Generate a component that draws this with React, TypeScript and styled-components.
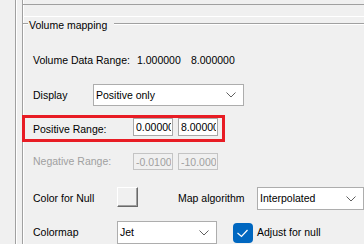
import React from 'react';
import styled, { createGlobalStyle } from 'styled-components';

const GlobalStyle = createGlobalStyle`
  * {
    box-sizing: border-box;
  }
  html, body {
    margin: 0;
    padding: 0;
    background: #f0f0f0;
  }
  body {
    width: 364px;
    height: 244px;
    overflow: hidden;
    font-family: "Liberation Sans", Arial, sans-serif;
    font-size: 10.5px;
    color: #000;
  }
`;

const Page = styled.div`
  display: flex;
  height: 244px;
  padding-left: 15px;
`;

const OuterPanel = styled.div`
  flex: 1;
  display: flex;
  min-width: 0;
  padding-left: 6px;
  border-left: 1px solid #a0a0a0;
  box-shadow: inset 1px 0 0 #fff;
`;

const InnerPanel = styled.div`
  flex: 1;
  display: flex;
  flex-direction: column;
  min-width: 0;
  border-left: 1px solid #a0a0a0;
  box-shadow: inset 1px 0 0 #fff;
`;

// etched rule: dark line with a white line under it
const Etch = styled.div<{ $w?: number; $mt: number }>`
  height: 2px;
  margin-top: ${p => p.$mt}px;
  border-top: 1px solid #a0a0a0;
  border-bottom: 1px solid #fff;
  ${p => (p.$w ? `flex: none; width: ${p.$w}px;` : 'flex: 1;')}
`;

const GroupHeader = styled.div`
  display: flex;
  align-items: flex-start;
  height: 13px;
  margin-top: 2px;
`;

const GroupTitle = styled.span`
  flex: none;
  line-height: 13px;
  padding: 0 7px 0 1px;
  white-space: nowrap;
`;

const GroupBody = styled.div`
  display: flex;
  flex-direction: column;
  padding-left: 10px;
`;

const Row = styled.div<{ $mt: number; $h: number }>`
  display: flex;
  align-items: center;
  height: ${p => p.$h}px;
  margin-top: ${p => p.$mt}px;
  white-space: nowrap;
`;

const HighlightRow = styled(Row)`
  align-items: flex-start;
  align-self: flex-start;
  margin-left: -11px;
  padding: 0 4px 0 8px;
  border: 3px solid #e81c24;
`;

const Label = styled.span<{ $w?: number; $ml?: number; $mt?: number; $disabled?: boolean }>`
  flex: none;
  width: ${p => (p.$w ? `${p.$w}px` : 'auto')};
  margin-left: ${p => p.$ml ?? 0}px;
  margin-top: ${p => p.$mt ?? 0}px;
  line-height: 13px;
  color: ${p => (p.$disabled ? '#a0a0a0' : '#000')};
`;

const TextBox = styled.input<{ $h: number }>`
  flex: none;
  width: 40px;
  height: ${p => p.$h}px;
  margin: 0;
  padding: 0 1px 0 2px;
  border: 1px solid #a8a8a8;
  border-radius: 0;
  background: #fff;
  color: #000;
  font: inherit;
  outline: none;

  &:disabled {
    border-color: #c4c4c4;
    background: #f0f0f0;
    color: #a0a0a0;
  }

  & + & {
    margin-left: 5px;
  }
`;

const Combo = styled.div<{ $w: number; $h: number }>`
  flex: none;
  display: flex;
  align-items: center;
  width: ${p => p.$w}px;
  height: ${p => p.$h}px;
  padding: 0 7px 0 2px;
  border: 1px solid #adadad;
  background: #fff;
`;

const ComboText = styled.span`
  flex: 1;
  line-height: 13px;
`;

const ColorButton = styled.button`
  flex: none;
  align-self: flex-start;
  width: 21px;
  height: 20px;
  margin: 0;
  padding: 0;
  background: #f0f0f0;
  border: 1px solid;
  border-color: #fff #696969 #696969 #fff;
  box-shadow: inset -1px -1px 0 #a0a0a0;
`;

const CheckBox = styled.span<{ $ml: number }>`
  flex: none;
  display: flex;
  align-items: center;
  justify-content: center;
  width: 20px;
  height: 20px;
  margin-left: ${p => p.$ml}px;
  border-radius: 4px;
  background: #0067c0;
`;

const Chevron = () => (
  <svg width="10" height="6" viewBox="0 0 10 6">
    <polyline points="0.5,0.5 5,5 9.5,0.5" fill="none" stroke="#606060" strokeWidth="1" />
  </svg>
);

const ComboBox: React.FC<{ value: string; w: number; h: number }> = ({ value, w, h }) => (
  <Combo $w={w} $h={h}>
    <ComboText>{value}</ComboText>
    <Chevron />
  </Combo>
);

const App: React.FC = () => {
  return (
    <>
      <GlobalStyle />
      <Page>
        <OuterPanel>
          <InnerPanel>
            <Etch $mt={4} />
            <GroupHeader>
              <Etch $w={5} $mt={4} />
              <GroupTitle>Volume mapping</GroupTitle>
              <Etch $mt={4} />
            </GroupHeader>
            <GroupBody>
              <Row $mt={22} $h={13}>
                <Label $w={104}>Volume Data Range:</Label>
                <Label $w={54}>1.000000</Label>
                <Label>8.000000</Label>
              </Row>

              <Row $mt={17} $h={22}>
                <Label $w={60}>Display</Label>
                <ComboBox value="Positive only" w={151} h={22} />
              </Row>

              <HighlightRow $mt={9} $h={27}>
                <Label $w={100} $mt={5}>Positive Range:</Label>
                <TextBox $h={18} readOnly value="0.000000" />
                <TextBox $h={18} readOnly value="8.000000" />
              </HighlightRow>

              <Row $mt={11} $h={17}>
                <Label $w={100} $disabled>Negative Range:</Label>
                <TextBox $h={17} disabled value="-0.010000" />
                <TextBox $h={17} disabled value="-10.00000" />
              </Row>

              <Row $mt={17} $h={23}>
                <Label $w={84}>Color for Null</Label>
                <ColorButton type="button" />
                <Label $w={79} $ml={40}>Map algorithm</Label>
                <ComboBox value="Interpolated" w={107} h={23} />
              </Row>

              <Row $mt={11} $h={23}>
                <Label $w={84}>Colormap</Label>
                <ComboBox value="Jet" w={100} h={23} />
                <CheckBox $ml={16}>
                  <svg width="20" height="20" viewBox="0 0 20 20">
                    <polyline points="4.5,10 8.5,13.5 14.5,7" fill="none" stroke="#fff" strokeWidth="1.2" />
                  </svg>
                </CheckBox>
                <Label $ml={4}>Adjust for null</Label>
              </Row>
            </GroupBody>
          </InnerPanel>
        </OuterPanel>
      </Page>
    </>
  );
};

export default App;
